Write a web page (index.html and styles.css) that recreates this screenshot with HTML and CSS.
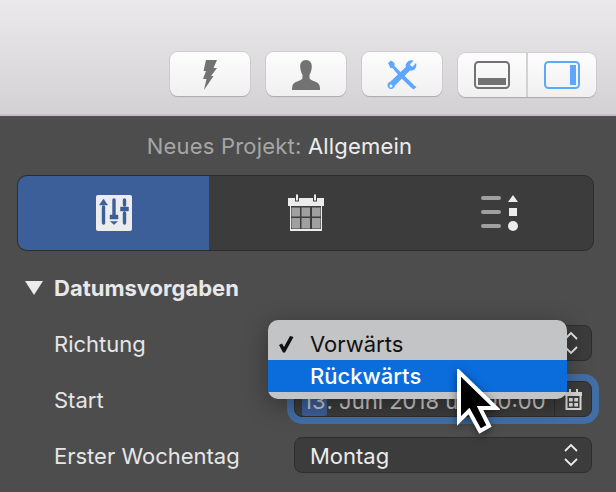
FILE: index.html
```html
<!DOCTYPE html>
<html lang="de">
<head>
<meta charset="utf-8">
<title>Neues Projekt</title>
<link rel="stylesheet" href="styles.css">
</head>
<body>
<header class="toolbar">
  <button class="tool">
    <svg width="16" height="30" viewBox="0 0 16 30"><path class="gray" d="M4 0H15L11.500 8H15L9 16H11.500L2 30L4.500 19H1L4 11H1.500Z"/></svg>
  </button>
  <button class="tool">
    <svg width="30" height="30" viewBox="0 0 30 30"><path class="gray" d="M15 0C19 0 21 3 20.800 7C20.600 10.500 19.500 13 18.500 15V18.500C20 20.500 23.500 21 26 22.500C28 23.700 29 25.500 29 30H1C1 25.500 2 23.700 4 22.500C6.500 21 10 20.500 11.500 18.500V15C10.500 13 9.400 10.500 9.200 7C9 3 11 0 15 0Z"/></svg>
  </button>
  <button class="tool">
    <svg width="30" height="30" viewBox="0 0 30 30">
      <path class="blue" d="M1 3L4 0.500L7.500 3V6L15.500 14L26 24V24.500L29.500 27L26.500 29.500L23.500 27L12.500 16.500L5.500 8H3.500Z"/>
      <path class="blue" d="M29 3C30.500 7 27 11.500 23 10.500L8 25.500C7.500 28.500 4 30 1.500 28C-.5 25.500 .5 22.500 3.500 21.500L18.800 7C18 3 22.500 -1 26.500 .8L22.800 4.500L25.200 7Z"/>
      <circle class="hole" cx="4" cy="26" r="1.500"/>
    </svg>
  </button>
  <div class="segmented">
    <button class="seg">
      <svg width="36" height="28" viewBox="0 0 36 28"><rect class="line-gray" x="1" y="1" width="34" height="26" rx="3.500"/><rect class="gray" x="4" y="17" width="28" height="7"/></svg>
    </button>
    <button class="seg">
      <svg width="36" height="28" viewBox="0 0 36 28"><rect class="line-blue" x="1" y="1" width="34" height="26" rx="3.500"/><rect class="blue" x="26" y="4" width="6" height="20"/></svg>
    </button>
  </div>
</header>
<main class="panel">
  <h1 class="heading"><span class="heading-dim">Neues Projekt:</span> Allgemein</h1>
  <nav class="tabs">
    <div class="tab tab-active">
      <svg width="36" height="36" viewBox="0 0 36 36">
        <rect class="tile" width="36" height="36" rx="2"/>
        <path class="tile-cut" d="M7.500 12V28M18 5V20M28.500 5V10M28.500 18V28"/>
        <path class="tile-fill" d="M7.500 4L11.500 10H3.500ZM14 20H22V24H14ZM14.500 26.500H21.500L18 29.500ZM24.500 12H32.500V16H24.500Z"/>
      </svg>
    </div>
    <div class="tab tab-cal">
      <svg width="36" height="38" viewBox="0 0 36 38">
        <path class="cal-head" d="M0 4H36V12H34V37H2V12H0Z"/>
        <rect class="cal-inner" x="3" y="12" width="30" height="23"/>
        <rect class="cal-cell" x="3.500" y="13.500" width="8.500" height="9"/><rect class="cal-cell" x="13.500" y="13.500" width="8.500" height="9"/><rect class="cal-cell" x="24" y="13.500" width="8.500" height="9"/>
        <rect class="cal-cell" x="3.500" y="24" width="8.500" height="10.500"/><rect class="cal-cell" x="13.500" y="24" width="8.500" height="10.500"/><rect class="cal-cell" x="24" y="24" width="8.500" height="10.500"/>
        <rect class="cal-ring" x="7.500" y="0" width="3" height="7"/><rect class="cal-ring" x="25.500" y="0" width="3" height="7"/>
      </svg>
    </div>
    <div class="tab tab-list">
      <svg width="38" height="36" viewBox="0 0 38 36">
        <path class="list-line" d="M2 3H18M2 17H18M2 31H18"/>
        <path class="list-mark" d="M32 0L37 7H27ZM28 13H36V21H28Z"/><circle class="list-mark" cx="32" cy="31" r="5"/>
      </svg>
    </div>
  </nav>
  <section class="group">
    <h2 class="group-title"><span class="triangle"></span>Datumsvorgaben</h2>
    <div class="row">
      <span class="label">Richtung</span>
      <div class="control select"><span class="value">Vorwärts</span><svg class="updown" width="14" height="24" viewBox="0 0 14 24"><path d="M1 8L7 2L13 8M1 16L7 22L13 16"/></svg></div>
    </div>
    <div class="row">
      <span class="label">Start</span>
      <div class="control datefield">
        <span class="date"><span class="date-sel">13</span>. Juni 2018 um 00:00</span>
        <span class="date-btn">
          <svg width="17" height="21" viewBox="0 0 17 21"><path class="small-cal" d="M1.500 4H15.500V20H1.500ZM5 0V4M12 0V4"/><path class="small-head" d="M0 3H17V7H0Z"/><path class="small-grid" d="M4 9H7.700V12.500H4ZM9.300 9H13V12.500H9.300ZM4 14H7.700V17.500H4ZM9.300 14H13V17.500H9.300Z"/></svg>
        </span>
      </div>
    </div>
    <div class="row">
      <span class="label">Erster Wochentag</span>
      <div class="control select"><span class="value">Montag</span><svg class="updown" width="14" height="24" viewBox="0 0 14 24"><path d="M1 8L7 2L13 8M1 16L7 22L13 16"/></svg></div>
    </div>
  </section>
</main>
<ul class="menu">
  <li class="menu-item">
    <svg class="check" width="15" height="17" viewBox="0 0 15 17"><path d="M0 9L3 7.500L5 11L11 0L14.500 1L6 16.500H4Z"/></svg>
    Vorwärts
  </li>
  <li class="menu-item menu-item-on">Rückwärts</li>
</ul>
<svg class="cursor" width="44" height="66" viewBox="0 0 44 66"><path class="cursor-shape" d="M3 3V52L13 42L24 62L33 57L24 39H40Z"/></svg>
</body>
</html>
```
FILE: styles.css
```css
* { box-sizing: border-box; }
html, body { margin: 0; height: 100%; }
body {
  width: 616px;
  height: 492px;
  overflow: hidden;
  position: relative;
  background: #4d4d4d;
  font-family: Inter, "Noto Sans", sans-serif;
  color: #ececec;
}
button { font: inherit; padding: 0; }
.gray { fill: #727272; }
.blue { fill: #5ea7ff; }
.hole { fill: #f8f8f8; }
.line-gray { fill: none; stroke: #727272; stroke-width: 2; }
.line-blue { fill: none; stroke: #5ea7ff; stroke-width: 2; }

.toolbar {
  height: 116px;
  padding: 52px 20px 0 170px;
  display: flex;
  align-items: flex-start;
  gap: 16px;
  background: linear-gradient(#ebe9eb, #d3d1d3);
  border-bottom: 2px solid #c4c2c4;
}
.tool, .segmented {
  border: 0;
  border-radius: 8px;
  background: linear-gradient(#fdfdfd, #f0f0f0);
  box-shadow: 0 1px 1px #aaa, 0 0 0 1px #d0ced0;
}
.tool {
  width: 80px;
  height: 44px;
  display: flex;
  align-items: center;
  justify-content: center;
}
.tool svg { margin-top: 2px; }
.segmented {
  margin-top: 1px;
  width: 138px;
  height: 44px;
  display: flex;
}
.seg {
  flex: 1;
  border: 0;
  background: transparent;
  display: flex;
  align-items: center;
  justify-content: center;
}
.seg:first-child { border-right: 2px solid #d2d2d2; }

.panel { padding: 0 24px 0 17px; }
.heading {
  margin: 0;
  height: 59px;
  padding: 18px 50px 0 0;
  text-align: center;
  font-size: 22px;
  line-height: 25px;
  font-weight: 400;
  letter-spacing: .2px;
  color: #ededed;
}
.heading-dim { color: #a6a6a6; }

.tabs {
  width: 577px;
  height: 76px;
  display: flex;
  background: #3c3c3c;
  border: 1px solid #2d2d2d;
  border-radius: 10px;
  overflow: hidden;
}
.tab {
  flex: 1;
  display: flex;
  align-items: center;
  justify-content: center;
}
.tab-active { flex: 0 0 191px; background: #3c5f99; }
.tab-cal svg { margin-left: 1px; }
.tab-list svg { margin-left: 5px; }
.tile { fill: #ececec; }
.tile-cut { fill: none; stroke: #3c5f99; stroke-width: 3.400; stroke-linecap: round; }
.tile-fill { fill: #3c5f99; stroke: #3c5f99; stroke-width: .5; }
.cal-head { fill: #ececec; }
.cal-inner { fill: #3c3c3c; }
.cal-cell { fill: #a0a0a0; }
.cal-ring { fill: #ececec; stroke: #3c3c3c; stroke-width: 1; }
.list-line { fill: none; stroke: #a0a0a0; stroke-width: 4; stroke-linecap: round; }
.list-mark { fill: #ececec; }

.group { padding-top: 23px; }
.group-title {
  margin: 0 0 23px;
  height: 28px;
  display: flex;
  align-items: center;
  font-size: 22px;
  font-weight: 700;
  color: #e8e8e8;
}
.triangle {
  width: 0;
  height: 0;
  margin: 0 11px 0 8px;
  border-left: 9px solid transparent;
  border-right: 9px solid transparent;
  border-top: 14px solid #ececec;
}
.row {
  height: 36px;
  margin-bottom: 20px;
  display: flex;
  align-items: center;
  justify-content: space-between;
  padding-left: 37px;
}
.label { padding-top: 2px; font-size: 22px; color: #e6e6e6; }
.control {
  width: 298px;
  height: 36px;
  background: #3c3c3c;
  border: 1px solid #2e2e2e;
  border-radius: 8px;
  display: flex;
  align-items: center;
  justify-content: space-between;
  font-size: 22px;
  color: #ececec;
}
.select { padding: 0 13px 0 15px; }
.value { padding-top: 2px; }
.updown { fill: none; stroke: #ececec; stroke-width: 1.800; }
.datefield { box-shadow: 0 0 0 7px #426ea6; }
.date { padding: 3px 0 0 7px; white-space: nowrap; color: #c8c8c8; }
.date-sel { background: #3c5f99; border-radius: 3px; padding: 2px 1px; }
.date-btn {
  width: 37px;
  height: 100%;
  border-left: 1px solid #2e2e2e;
  display: flex;
  align-items: center;
  justify-content: center;
}
.small-cal { fill: none; stroke: #d8d8d8; stroke-width: 2; }
.small-head { fill: #d8d8d8; }
.small-grid { fill: #d8d8d8; }

.menu {
  position: absolute;
  left: 268px;
  top: 320px;
  width: 299px;
  height: 79px;
  margin: 0;
  padding: 8px 0 0;
  list-style: none;
  background: #c3c4c6;
  border-radius: 10px;
  box-shadow: 0 6px 24px rgba(0, 0, 0, .35);
  font-size: 22px;
  color: #111;
}
.menu-item {
  height: 32px;
  padding-left: 42px;
  display: flex;
  align-items: center;
  position: relative;
}
.menu-item-on { background: #0b6cdc; color: #fff; font-weight: 500; }
.check {
  position: absolute;
  left: 11px;
  top: 8px;
  fill: #111;
}
.cursor {
  position: absolute;
  left: 456px;
  top: 369px;
  filter: drop-shadow(0 2px 4px rgba(0, 0, 0, .5));
}
.cursor-shape { fill: #000; stroke: #fff; stroke-width: 4; stroke-linejoin: miter; }
```
